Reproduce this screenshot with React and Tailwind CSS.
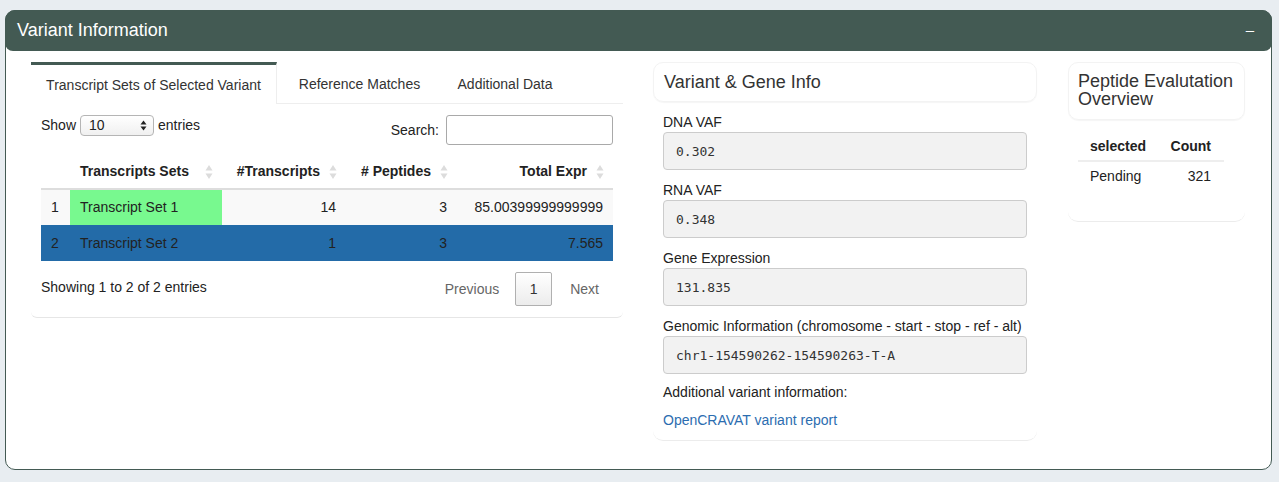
// Variant Information panel — tabs + DataTable on the left, variant/gene card
// in the middle and a small peptide overview on the right.

function SortIcon() {
  return (
    <svg width="8" height="16" viewBox="0 0 8 16" className="absolute right-[9px] top-1/2 -translate-y-1/2">
      <path d="M4 1 L7.5 6.5 L0.5 6.5 Z" fill="#dcdcdc" />
      <path d="M4 15 L7.5 9.5 L0.5 9.5 Z" fill="#dcdcdc" />
    </svg>
  );
}

const rows = [
  { n: 1, set: "Transcript Set 1", tr: "14", pep: "3", expr: "85.00399999999999" },
  { n: 2, set: "Transcript Set 2", tr: "1", pep: "3", expr: "7.565" },
];

function Tabs() {
  return (
    <div className="flex h-[42px] text-[14px] text-[#333]">
      <div className="flex w-[246px] items-center justify-center border-t-[3px] border-r border-t-[#435a53] border-r-[#eeeeee] bg-white pt-[1px]">
        Transcript Sets of Selected Variant
      </div>
      <div className="flex w-[165px] items-center justify-center border-b border-[#eeeeee] pt-[4px]">
        Reference Matches
      </div>
      <div className="flex w-[126px] items-center justify-center border-b border-[#eeeeee] pt-[4px]">
        Additional Data
      </div>
      <div className="flex-1 border-b border-[#eeeeee]" />
    </div>
  );
}

function TranscriptTable() {
  return (
    <div className="px-[10px] pt-[11px] text-[14px] text-[#222]">
      <div className="flex items-start justify-between">
        <div className="flex h-[21px] items-center gap-[4px]">
          <span>Show</span>
          <div className="flex h-[21px] w-[74px] items-center justify-between rounded-[4px] border border-[#b5b5b5] bg-gradient-to-b from-white to-[#f0f0f0] pl-[8px] pr-[6px] text-[14px]">
            <span>10</span>
            <svg width="7" height="11" viewBox="0 0 7 11">
              <path d="M3.5 0.5 L6.5 4.5 L0.5 4.5 Z" fill="#222" />
              <path d="M3.5 10.5 L6.5 6.5 L0.5 6.5 Z" fill="#222" />
            </svg>
          </div>
          <span>entries</span>
        </div>
        <div className="flex items-center">
          <span>Search:</span>
          <div className="ml-[7px] h-[30px] w-[167px] rounded-[3px] border border-[#a9a9a9] bg-white" />
        </div>
      </div>

      <table className="mt-[10px] w-full border-collapse">
        <thead>
          <tr className="h-[34px] border-b-2 border-[#dddddd] font-bold">
            <th className="w-[29px]" />
            <th className="relative w-[152px] pl-[10px] text-left">
              Transcripts Sets
              <SortIcon />
            </th>
            <th className="relative w-[124px] pr-[26px] text-right">
              #Transcripts
              <SortIcon />
            </th>
            <th className="relative w-[111px] pr-[26px] text-right">
              # Peptides
              <SortIcon />
            </th>
            <th className="relative pr-[26px] text-right">
              Total Expr
              <SortIcon />
            </th>
          </tr>
        </thead>
        <tbody>
          {rows.map((r) => {
            const sel = r.n === 2;
            return (
              <tr key={r.n} className={`h-[36px] ${sel ? "bg-[#236ba8]" : "bg-[#f9f9f9]"}`}>
                <td className="pl-[10px]">{r.n}</td>
                <td className={`pl-[10px] ${sel ? "" : "bg-[#78f98f]"}`}>{r.set}</td>
                <td className="pr-[10px] text-right">{r.tr}</td>
                <td className="pr-[10px] text-right">{r.pep}</td>
                <td className="pr-[10px] text-right">{r.expr}</td>
              </tr>
            );
          })}
        </tbody>
      </table>

      <div className="mt-[11px] flex items-start justify-between">
        <div className="pt-[5px]">Showing 1 to 2 of 2 entries</div>
        <div className="flex items-center text-[#666]">
          <span className="px-[14px]">Previous</span>
          <span className="ml-[2px] flex h-[34px] w-[37px] items-center justify-center rounded-[2px] border border-[#b0b0b0] bg-gradient-to-b from-white to-[#ececec] text-[#333]">
            1
          </span>
          <span className="ml-[2px] pl-[16px] pr-[14px]">Next</span>
        </div>
      </div>
    </div>
  );
}

function Field({ label, value }) {
  return (
    <div className="mb-[10px]">
      <div className="h-[20px] leading-[20px]">{label}</div>
      <div className="flex h-[38px] items-center rounded-[4px] border border-[#cccccc] bg-[#f2f2f2] px-[12px] pt-[2px] font-['DejaVu_Sans_Mono',monospace] text-[13px] text-[#333]">
        {value}
      </div>
    </div>
  );
}

function VariantCard() {
  return (
    <div className="w-[384px] rounded-b-[10px] border-b border-[#ececec] pb-[10px] text-[14px] text-[#222]">
      <div className="flex h-[40px] items-center rounded-[10px] border border-[#f3f3f3] pl-[10px] text-[18px] text-[#333] shadow-[0_1px_1px_rgba(0,0,0,0.04)]">
        Variant &amp; Gene Info
      </div>
      <div className="px-[10px] pt-[10px]">
        <Field label="DNA VAF" value="0.302" />
        <Field label="RNA VAF" value="0.348" />
        <Field label="Gene Expression" value="131.835" />
        <Field label="Genomic Information (chromosome - start - stop - ref - alt)" value="chr1-154590262-154590263-T-A" />
        <div className="-mt-[2px] h-[20px] leading-[20px]">Additional variant information:</div>
        <div className="mt-[8px] h-[20px] leading-[20px] text-[#2c6db0]">OpenCRAVAT variant report</div>
      </div>
    </div>
  );
}

function PeptideCard() {
  return (
    <div className="h-[160px] w-[177px] rounded-b-[10px] border-b border-[#ececec] text-[14px] text-[#222]">
      <div className="h-[58px] rounded-[10px] border border-[#f3f3f3] pl-[9px] pt-[9px] text-[18px] leading-[18px] text-[#333] shadow-[0_1px_1px_rgba(0,0,0,0.04)]">
        Peptide Evalutation
        <br />
        Overview
      </div>
      <table className="ml-[10px] mt-[13px] w-[146px] border-collapse">
        <thead>
          <tr className="h-[28px] border-b-2 border-[#eeeeee] font-bold">
            <th className="pl-[12px] text-left">selected</th>
            <th className="pr-[13px] text-right">Count</th>
          </tr>
        </thead>
        <tbody>
          <tr className="h-[30px]">
            <td className="pl-[12px]">Pending</td>
            <td className="pr-[13px] text-right">321</td>
          </tr>
        </tbody>
      </table>
    </div>
  );
}

export default function App() {
  return (
    <div className="min-h-screen bg-[#e8edf1] px-[5px] pt-[10px] font-['Liberation_Sans',Arial,sans-serif]">
      <div className="w-[1267px] rounded-[10px] border border-[#435a53] bg-white">
        <div className="-m-px flex h-[41px] items-center justify-between rounded-t-[10px] rounded-b-[8px] bg-[#435a53] pl-[12px] pr-[18px] text-white">
          <span className="text-[18px]">Variant Information</span>
          <span className="text-[15px]">–</span>
        </div>
        <div className="flex h-[419px] items-start pl-[25px] pt-[12px]">
          <div className="w-[592px] rounded-b-[6px] border-b border-[#e6e6e6] pb-[11px]">
            <Tabs />
            <TranscriptTable />
          </div>
          <div className="ml-[30px]">
            <VariantCard />
          </div>
          <div className="ml-[31px]">
            <PeptideCard />
          </div>
        </div>
      </div>
    </div>
  );
}
